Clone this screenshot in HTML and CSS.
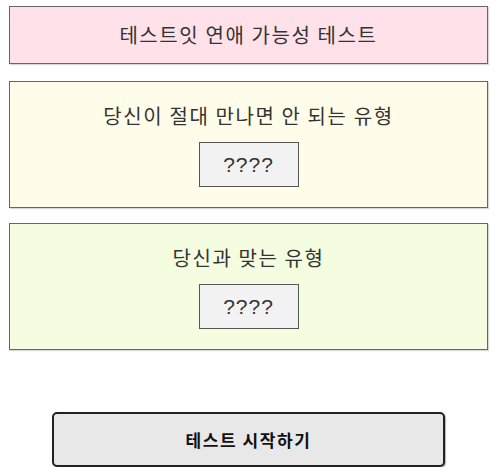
FILE: index.html
```html
<!DOCTYPE html>
<html>
<head>
    <meta charset="UTF-8">
    <title>테스트잇 연애 가능성 테스트</title>
    <link rel="stylesheet" href="styles.css">
</head>
<body>

<div id="wrap">
    <div class="box title-box">테스트잇 연애 가능성 테스트</div>

    <div class="box type-box bad">
        <p class="type-title">당신이 절대 만나면 안 되는 유형</p>
        <div class="secret">????</div>
    </div>

    <div class="box type-box good">
        <p class="type-title">당신과 맞는 유형</p>
        <div class="secret">????</div>
    </div>

    <a href="javascript:;" id="start">테스트 시작하기</a>
</div>

</body>
</html>
```

FILE: styles.css
```css
body,div,p{margin:0;padding:0;}
body {
    background: #fff;
    font-family: "Noto Sans CJK KR", "Noto Sans", sans-serif;
    color: #333;
}
#wrap {
    width: 479px;
    margin: 6px 0 0 9px;
    display: flex;
    flex-direction: column;
}
.box {
    border: 1px solid #666;
    box-shadow: 1px 1px 1px rgba(0,0,0,0.15);
}
.title-box {
    height: 56px;
    line-height: 56px;
    text-align: center;
    font-size: 20px;
    letter-spacing: 1.6px;
    background: #ffe1ea;
}
.type-box {
    margin-top: 17px;
    padding: 19px 0 20px 0;
    display: flex;
    flex-direction: column;
    align-items: center;
}
.bad {
    background: #fffde9;
}
.good {
    margin-top: 15px;
    background: #f4fde0;
}
.type-title {
    font-size: 20px;
    line-height: 30px;
    letter-spacing: 1.6px;
}
.secret {
    margin-top: 11px;
    width: 98px;
    height: 43px;
    line-height: 43px;
    text-align: center;
    font-family: "Liberation Sans", Arial, sans-serif;
    font-size: 21px;
    letter-spacing: 1px;
    background: #f2f2f2;
    border: 1px solid #555;
}
#start {
    align-self: center;
    margin-top: 62px;
    width: 389px;
    height: 51px;
    line-height: 51px;
    text-align: center;
    font-size: 17px;
    font-weight: bold;
    letter-spacing: 1.6px;
    color: #111;
    text-decoration: none;
    background: #e8e8e8;
    border: 2px solid #222;
    border-radius: 5px;
    box-shadow: 1px 1px 1px rgba(0,0,0,0.3);
}
```
